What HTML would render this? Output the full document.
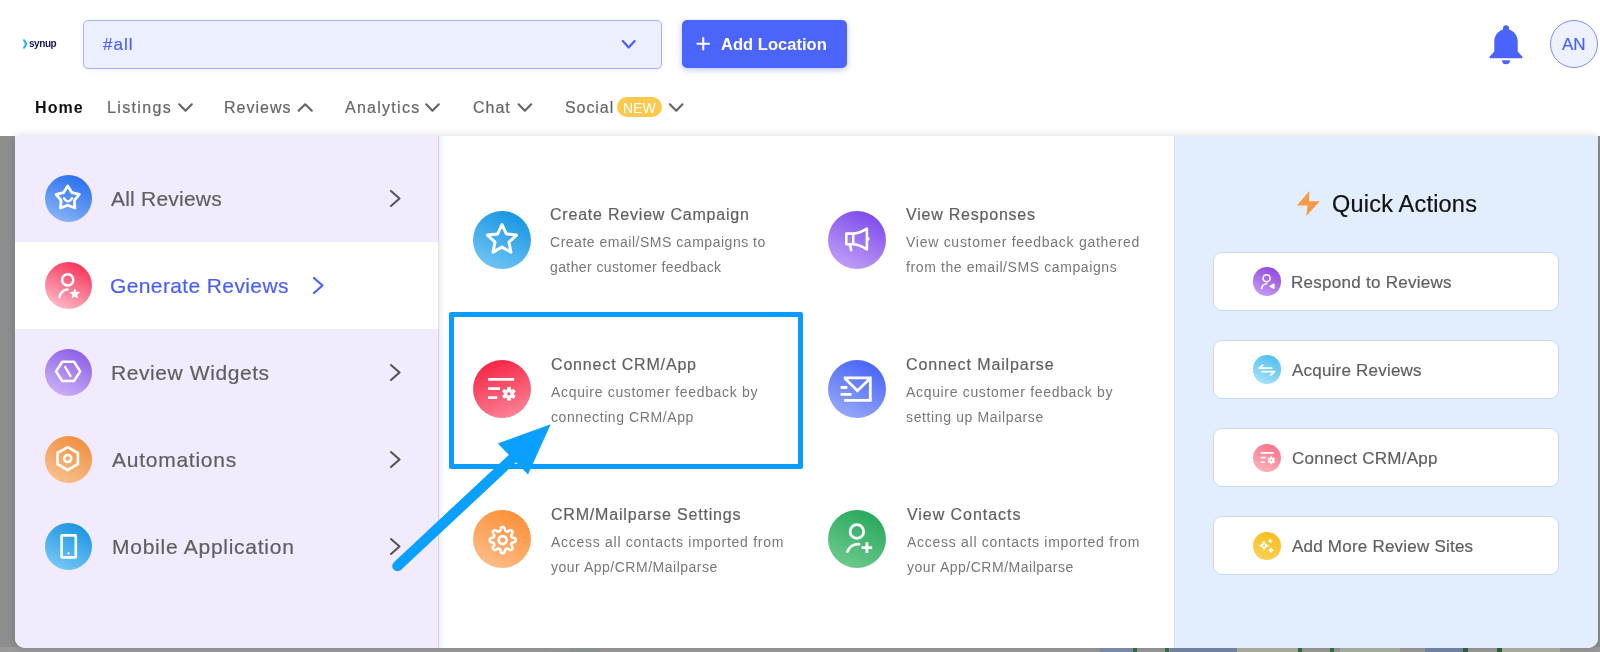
<!DOCTYPE html>
<html><head><meta charset="utf-8">
<style>
*{box-sizing:border-box;margin:0;padding:0}
html,body{width:1600px;height:652px;overflow:hidden;background:#fff;font-family:"Liberation Sans",sans-serif;position:relative;-webkit-font-smoothing:antialiased}
.t{position:absolute;white-space:nowrap;line-height:1;will-change:transform}
.c{position:absolute;border-radius:50%}
svg{position:absolute;overflow:visible}
#hdr{position:absolute;left:0;top:0;width:1600px;height:136px;background:#fff}
#ovl{position:absolute;left:0;top:136px;width:1600px;height:516px;background:#8b8f8f}
#ovb{position:absolute;left:0;top:647px;width:1600px;height:5px;background:#999}
#panel{position:absolute;left:15px;top:136px;width:1582.8px;height:511.5px;border-radius:0 0 10px 10px;overflow:hidden;background:#fff;box-shadow:0 0 9px rgba(0,0,0,.16)}
#lcol{position:absolute;left:0;top:0;width:424px;height:100%;background:#f1ebfd}
#lsel{position:absolute;left:0;top:106px;width:424px;height:87px;background:#fff}
#lsh{position:absolute;left:423px;top:0;width:7px;height:100%;background:linear-gradient(90deg,rgba(0,0,0,.13),rgba(0,0,0,.04) 30%,rgba(0,0,0,0))}
#rcol{position:absolute;left:1159.2px;top:0;width:424px;height:100%;background:#e2eefd}
#rsh{position:absolute;left:1158.7px;top:0;width:1.5px;height:100%;background:rgba(0,0,0,.05);z-index:2}
.card{position:absolute;left:1213px;width:346px;height:59px;background:#fff;border:1px solid #cdd6f6;border-radius:9px}
</style></head><body>
<div id="hdr"></div>
<div id="ovl"></div>
<div id="ovb"></div>
<div id="panel"><div id="lcol"></div><div id="lsel"></div><div id="lsh"></div><div id="rsh"></div><div id="rcol"></div></div>
<svg style="left:22px;top:39px" width="6" height="10" viewBox="0 0 6 10"><path d="M0.5 0.5 L3 0.5 L5.5 5 L3 9.5 L0.5 9.5 L3 5Z" fill="#22b8f0"/></svg>
<div class="t" style="left:29.20px;top:39px;font-size:10px;color:#16195a;letter-spacing:-0.45px;font-weight:700;">synup</div>
<div style="position:absolute;left:83px;top:20px;width:579px;height:49px;background:#ecefff;border:1px solid #a6b3fb;border-radius:5px;box-shadow:0 1px 4px rgba(80,100,240,.10)"></div>
<div class="t" style="left:103.20px;top:36px;font-size:17px;color:#4a60f5;letter-spacing:1.0px;font-weight:400;-webkit-text-stroke:0.2px #4a60f5;">#all</div>
<svg style="left:0;top:0" width="1600" height="136"><path d="M622.8 41 L628.6999999999999 47.5 L634.5999999999999 41" stroke="#4a60f5" stroke-width="2.2" fill="none" stroke-linecap="round" stroke-linejoin="round"/></svg>
<div style="position:absolute;left:681.5px;top:20px;width:165.5px;height:48px;background:#4b65fb;border-radius:5px;box-shadow:0 2px 6px rgba(75,101,251,.35)"></div>
<svg style="left:0;top:0" width="1600" height="136"><path d="M697.5 43.7 H709 M703.25 38 V49.5" stroke="#fff" stroke-width="2.1" stroke-linecap="round"/></svg>
<div class="t" style="left:721.00px;top:36px;font-size:16.5px;color:#fff;letter-spacing:0.03px;font-weight:700;">Add Location</div>
<svg style="left:0;top:0" width="1600" height="136" stroke="none">
<path fill="#4a63fb" d="M1506 25.2 a3 3 0 0 1 3 3 v1.3 c5.2 1.6 8.7 6.2 8.7 12 v10 l4.6 5 v1.8 h-32.6 v-1.8 l4.6 -5 v-10 c0 -5.8 3.5 -10.4 8.7 -12 v-1.3 a3 3 0 0 1 3 -3z"/>
<path fill="#4a63fb" d="M1502 60.2 h8 a4 4 0 0 1 -8 0z"/>
</svg>
<div style="position:absolute;left:1549.8px;top:19.9px;width:48.4px;height:48.4px;border-radius:50%;background:#eef1fe;border:1px solid #7d8ff8"></div>
<div class="t" style="left:1561.50px;top:36px;font-size:17px;color:#4a60f5;letter-spacing:0px;font-weight:400;-webkit-text-stroke:0.2px #4a60f5;">AN</div>
<div class="t" style="left:35.20px;top:100px;font-size:16px;color:#111;letter-spacing:1.1px;font-weight:700;">Home</div>
<div class="t" style="left:106.50px;top:100px;font-size:16px;color:#666;letter-spacing:1.36px;font-weight:400;-webkit-text-stroke:0.2px #666;">Listings</div>
<div class="t" style="left:223.70px;top:100px;font-size:16px;color:#666;letter-spacing:1.02px;font-weight:400;-webkit-text-stroke:0.2px #666;">Reviews</div>
<div class="t" style="left:344.50px;top:100px;font-size:16px;color:#666;letter-spacing:1.27px;font-weight:400;-webkit-text-stroke:0.2px #666;">Analytics</div>
<div class="t" style="left:472.50px;top:100px;font-size:16px;color:#666;letter-spacing:0.98px;font-weight:400;-webkit-text-stroke:0.2px #666;">Chat</div>
<div class="t" style="left:564.50px;top:100px;font-size:16px;color:#666;letter-spacing:0.93px;font-weight:400;-webkit-text-stroke:0.2px #666;">Social</div>
<div style="position:absolute;left:617.4px;top:96.8px;width:44.3px;height:20.2px;border-radius:10px;background:#fcc94e"></div>
<div class="t" style="left:623.30px;top:101px;font-size:14px;color:#fff;letter-spacing:0px;font-weight:400;">NEW</div>
<svg style="left:0;top:0" width="1600" height="136" fill="none" stroke="#666" stroke-width="2.2" stroke-linecap="round" stroke-linejoin="round"><path d="M179.2 104.3 L185.5 110.7 L191.79999999999998 104.3"/><path d="M426.2 104.3 L432.5 110.7 L438.8 104.3"/><path d="M518.6 104.3 L524.9 110.7 L531.2 104.3"/><path d="M669.9 104.3 L676.1999999999999 110.7 L682.5 104.3"/><path d="M298.6 110.7 L305.20000000000005 104.3 L311.8 110.7"/></svg>
<div class="c" style="left:44.50px;top:175.00px;width:47px;height:47px;background:linear-gradient(205deg,#1c66ee,#94bcf8)"></div>
<div class="t" style="left:111.25px;top:188px;font-size:21px;color:#5f5f5f;letter-spacing:0.22px;font-weight:400;-webkit-text-stroke:0.2px #5f5f5f;">All Reviews</div>
<div class="c" style="left:44.50px;top:262.00px;width:47px;height:47px;background:linear-gradient(205deg,#f5214b,#ffcad3)"></div>
<div class="t" style="left:110.20px;top:275px;font-size:21px;color:#4a60f5;letter-spacing:0.38px;font-weight:400;-webkit-text-stroke:0.2px #4a60f5;">Generate Reviews</div>
<div class="c" style="left:44.50px;top:349.00px;width:47px;height:47px;background:linear-gradient(205deg,#8553e6,#d2bbf8)"></div>
<div class="t" style="left:110.50px;top:362px;font-size:21px;color:#5f5f5f;letter-spacing:0.58px;font-weight:400;-webkit-text-stroke:0.2px #5f5f5f;">Review Widgets</div>
<div class="c" style="left:44.50px;top:436.00px;width:47px;height:47px;background:linear-gradient(205deg,#ee8935,#f9c797)"></div>
<div class="t" style="left:111.50px;top:449px;font-size:21px;color:#5f5f5f;letter-spacing:0.75px;font-weight:400;-webkit-text-stroke:0.2px #5f5f5f;">Automations</div>
<div class="c" style="left:44.50px;top:523.00px;width:47px;height:47px;background:linear-gradient(205deg,#0f8de0,#82cef7)"></div>
<div class="t" style="left:112.10px;top:536px;font-size:21px;color:#5f5f5f;letter-spacing:0.74px;font-weight:400;-webkit-text-stroke:0.2px #5f5f5f;">Mobile Application</div>
<svg style="left:40px;top:170px" width="56" height="56" viewBox="0 0 56 56" fill="none" stroke="#fff" stroke-linecap="round" stroke-linejoin="round"><polygon points="27.70,16.00 31.81,22.54 39.30,24.43 34.36,30.36 34.87,38.07 27.70,35.20 20.53,38.07 21.04,30.36 16.10,24.43 23.59,22.54" stroke-width="2.8"/><path d="M23.9 28.1 Q28 34.6 32.1 28.1" stroke-width="2.2"/></svg>
<svg style="left:40px;top:258px" width="56" height="56" viewBox="0 0 56 56" fill="none" stroke="#fff" stroke-linecap="round" stroke-linejoin="round"><circle cx="27.7" cy="21.9" r="5.6" stroke-width="2.5"/><path d="M19.6 39 A8.2 8.2 0 0 1 27.5 31.6" stroke-width="2.5"/><polygon points="34.80,30.30 36.33,33.80 40.13,34.17 37.27,36.70 38.09,40.43 34.80,38.50 31.51,40.43 32.33,36.70 29.47,34.17 33.27,33.80" fill="#fff" stroke="none"/></svg>
<svg style="left:40px;top:344px" width="56" height="56" viewBox="0 0 56 56" fill="none" stroke="#fff" stroke-linecap="round" stroke-linejoin="round"><polygon points="16,27.4 22.3,17.8 34,17.8 40.2,27.4 34,37 22.3,37" stroke-width="2.6"/><path d="M25.2 23 L30.4 32" stroke-width="2.4"/></svg>
<svg style="left:40px;top:431px" width="56" height="56" viewBox="0 0 56 56" fill="none" stroke="#fff" stroke-linecap="round" stroke-linejoin="round"><polygon points="27.7,16.2 37.9,22 37.9,33.2 27.7,39 17.5,33.2 17.5,22" stroke-width="2.6"/><circle cx="27.7" cy="27.5" r="3.6" stroke-width="2.5"/></svg>
<svg style="left:40px;top:518px" width="56" height="56" viewBox="0 0 56 56" fill="none" stroke="#fff" stroke-linecap="round" stroke-linejoin="round"><rect x="21.6" y="17.4" width="14.2" height="22" rx="0.5" stroke-width="2.6"/><circle cx="28.4" cy="35.4" r="1.1" fill="#fff" stroke="none"/></svg>
<svg style="left:0;top:0" width="1600" height="652" fill="none" stroke="#555" stroke-width="2.1" stroke-linecap="round" stroke-linejoin="round"><path d="M391 191.0 L399.5 198.5 L391 206.0"/><path d="M391 365.0 L399.5 372.5 L391 380.0"/><path d="M391 452.0 L399.5 459.5 L391 467.0"/><path d="M391 539.0 L399.5 546.5 L391 554.0"/></svg>
<svg style="left:0;top:0" width="1600" height="652" fill="none" stroke="#4a60f5" stroke-width="2.2" stroke-linecap="round" stroke-linejoin="round"><path d="M314 278 L322.5 285.5 L314 293"/></svg>
<div class="c" style="left:472.50px;top:210.60px;width:58px;height:58px;background:linear-gradient(205deg,#0a8fe0,#7ccaf6)"></div>
<div class="t" style="left:550.20px;top:207px;font-size:16px;color:#606060;letter-spacing:0.79px;font-weight:400;-webkit-text-stroke:0.2px #606060;">Create Review Campaign</div>
<div class="t" style="left:550.20px;top:235px;font-size:14px;color:#777;letter-spacing:0.52px;font-weight:400;">Create email/SMS campaigns to</div>
<div class="t" style="left:550.20px;top:260px;font-size:14px;color:#777;letter-spacing:0.4px;font-weight:400;">gather customer feedback</div>
<div class="c" style="left:828.40px;top:210.50px;width:58px;height:58px;background:linear-gradient(205deg,#7440ea,#c8a9f7)"></div>
<div class="t" style="left:906.20px;top:207px;font-size:16px;color:#606060;letter-spacing:0.78px;font-weight:400;-webkit-text-stroke:0.2px #606060;">View Responses</div>
<div class="t" style="left:906.20px;top:235px;font-size:14px;color:#777;letter-spacing:0.73px;font-weight:400;">View customer feedback gathered</div>
<div class="t" style="left:906.20px;top:260px;font-size:14px;color:#777;letter-spacing:0.6px;font-weight:400;">from the email/SMS campaigns</div>
<div class="c" style="left:472.50px;top:360.20px;width:58px;height:58px;background:linear-gradient(160deg,#f61a3c,#fb8d9e)"></div>
<div class="t" style="left:550.60px;top:357px;font-size:16px;color:#606060;letter-spacing:0.83px;font-weight:400;-webkit-text-stroke:0.2px #606060;">Connect CRM/App</div>
<div class="t" style="left:550.60px;top:385px;font-size:14px;color:#777;letter-spacing:0.67px;font-weight:400;">Acquire customer feedback by</div>
<div class="t" style="left:550.60px;top:410px;font-size:14px;color:#777;letter-spacing:0.59px;font-weight:400;">connecting CRM/App</div>
<div class="c" style="left:828.40px;top:359.90px;width:58px;height:58px;background:linear-gradient(205deg,#3d5bf7,#a0b1fa)"></div>
<div class="t" style="left:906.20px;top:357px;font-size:16px;color:#606060;letter-spacing:0.89px;font-weight:400;-webkit-text-stroke:0.2px #606060;">Connect Mailparse</div>
<div class="t" style="left:906.20px;top:385px;font-size:14px;color:#777;letter-spacing:0.67px;font-weight:400;">Acquire customer feedback by</div>
<div class="t" style="left:906.20px;top:410px;font-size:14px;color:#777;letter-spacing:0.63px;font-weight:400;">setting up Mailparse</div>
<div class="c" style="left:472.50px;top:509.90px;width:58px;height:58px;background:linear-gradient(205deg,#fb8a2c,#fcc293)"></div>
<div class="t" style="left:550.60px;top:507px;font-size:16px;color:#606060;letter-spacing:0.81px;font-weight:400;-webkit-text-stroke:0.2px #606060;">CRM/Mailparse Settings</div>
<div class="t" style="left:550.60px;top:535px;font-size:14px;color:#777;letter-spacing:0.72px;font-weight:400;">Access all contacts imported from</div>
<div class="t" style="left:550.60px;top:560px;font-size:14px;color:#777;letter-spacing:0.51px;font-weight:400;">your App/CRM/Mailparse</div>
<div class="c" style="left:828.40px;top:510.00px;width:58px;height:58px;background:linear-gradient(205deg,#1ea456,#76ce94)"></div>
<div class="t" style="left:906.60px;top:507px;font-size:16px;color:#606060;letter-spacing:0.95px;font-weight:400;-webkit-text-stroke:0.2px #606060;">View Contacts</div>
<div class="t" style="left:906.60px;top:535px;font-size:14px;color:#777;letter-spacing:0.72px;font-weight:400;">Access all contacts imported from</div>
<div class="t" style="left:906.60px;top:560px;font-size:14px;color:#777;letter-spacing:0.51px;font-weight:400;">your App/CRM/Mailparse</div>
<svg style="left:471.5px;top:209.6px" width="60" height="60" viewBox="0 0 60 60" fill="none" stroke="#fff" stroke-linecap="round" stroke-linejoin="round"><polygon points="30.00,14.50 34.29,23.89 44.55,25.07 36.94,32.06 38.99,42.18 30.00,37.10 21.01,42.18 23.06,32.06 15.45,25.07 25.71,23.89" stroke-width="3"/></svg>
<svg style="left:827px;top:209px" width="60" height="60" viewBox="0 0 60 60" fill="none" stroke="#fff" stroke-linecap="round" stroke-linejoin="round"><path d="M19.3 24.6 H26.2 V35.3 H19.3Z M26.2 24.6 C31 24.6 36 22 39.9 19.6 V40.4 C36 38 31 35.3 26.2 35.3 M40 28 L41.3 29.9 L40 31.8 M22.7 35.4 L24.2 41.2" stroke-width="2.6"/></svg>
<svg style="left:471px;top:359px" width="60" height="60" viewBox="0 0 60 60" fill="none" stroke="#fff" stroke-linecap="round" stroke-linejoin="round"><path d="M17 20.4 H43.2 M17 29.6 H29 M17 38.6 H26.2" stroke-width="2.8" stroke-linecap="butt"/><path d="M36.52 30.41 L36.46 28.36 L39.34 28.36 L39.28 30.41 L41.01 31.41 L42.76 30.33 L44.20 32.83 L42.39 33.80 L42.39 35.80 L44.20 36.77 L42.76 39.27 L41.01 38.19 L39.28 39.19 L39.34 41.24 L36.46 41.24 L36.52 39.19 L34.79 38.19 L33.04 39.27 L31.60 36.77 L33.41 35.80 L33.41 33.80 L31.60 32.83 L33.04 30.33 L34.79 31.41Z" fill="#fff" stroke="#fff" stroke-width="1"/><circle cx="37.9" cy="34.8" r="1.6" fill="#f8506a" stroke="none"/></svg>
<svg style="left:827px;top:359px" width="60" height="60" viewBox="0 0 60 60" fill="none" stroke="#fff" stroke-linecap="round" stroke-linejoin="round"><path d="M16.8 18.9 H43.3 V41.3 H17.1 M17.8 19.2 L30.4 31.8 L42.5 20 M13.6 28.5 H20.3 M13.6 35.4 H24.6" stroke-width="2.8" stroke-linecap="butt" stroke-linejoin="miter"/></svg>
<svg style="left:471px;top:509px" width="60" height="60" viewBox="0 0 60 60" fill="none" stroke="#fff" stroke-linecap="round" stroke-linejoin="round"><path d="M44.70 31.10 L44.68 31.44 L44.64 31.78 L44.54 32.11 L44.37 32.43 L44.09 32.73 L43.65 32.99 L43.03 33.20 L42.34 33.36 L41.72 33.51 L41.27 33.66 L40.96 33.84 L40.75 34.04 L40.60 34.25 L40.49 34.47 L40.38 34.70 L40.30 34.93 L40.23 35.17 L40.18 35.42 L40.19 35.71 L40.28 36.05 L40.49 36.48 L40.82 37.02 L41.20 37.63 L41.48 38.21 L41.61 38.71 L41.60 39.12 L41.49 39.46 L41.33 39.77 L41.12 40.04 L40.89 40.29 L40.64 40.52 L40.37 40.73 L40.06 40.89 L39.72 41.00 L39.31 41.01 L38.81 40.88 L38.23 40.60 L37.62 40.22 L37.08 39.89 L36.65 39.68 L36.31 39.59 L36.02 39.58 L35.77 39.63 L35.53 39.70 L35.30 39.78 L35.07 39.89 L34.85 40.00 L34.64 40.15 L34.44 40.36 L34.26 40.67 L34.11 41.12 L33.96 41.74 L33.80 42.43 L33.59 43.05 L33.33 43.49 L33.03 43.77 L32.71 43.94 L32.38 44.04 L32.04 44.08 L31.70 44.10 L31.36 44.08 L31.02 44.04 L30.69 43.94 L30.37 43.77 L30.07 43.49 L29.81 43.05 L29.60 42.43 L29.44 41.74 L29.29 41.12 L29.14 40.67 L28.96 40.36 L28.76 40.15 L28.55 40.00 L28.33 39.89 L28.10 39.78 L27.87 39.70 L27.63 39.63 L27.38 39.58 L27.09 39.59 L26.75 39.68 L26.32 39.89 L25.78 40.22 L25.17 40.60 L24.59 40.88 L24.09 41.01 L23.68 41.00 L23.34 40.89 L23.03 40.73 L22.76 40.52 L22.51 40.29 L22.28 40.04 L22.07 39.77 L21.91 39.46 L21.80 39.12 L21.79 38.71 L21.92 38.21 L22.20 37.63 L22.58 37.02 L22.91 36.48 L23.12 36.05 L23.21 35.71 L23.22 35.42 L23.17 35.17 L23.10 34.93 L23.02 34.70 L22.91 34.47 L22.80 34.25 L22.65 34.04 L22.44 33.84 L22.13 33.66 L21.68 33.51 L21.06 33.36 L20.37 33.20 L19.75 32.99 L19.31 32.73 L19.03 32.43 L18.86 32.11 L18.76 31.78 L18.72 31.44 L18.70 31.10 L18.72 30.76 L18.76 30.42 L18.86 30.09 L19.03 29.77 L19.31 29.47 L19.75 29.21 L20.37 29.00 L21.06 28.84 L21.68 28.69 L22.13 28.54 L22.44 28.36 L22.65 28.16 L22.80 27.95 L22.91 27.73 L23.02 27.50 L23.10 27.27 L23.17 27.03 L23.22 26.78 L23.21 26.49 L23.12 26.15 L22.91 25.72 L22.58 25.18 L22.20 24.57 L21.92 23.99 L21.79 23.49 L21.80 23.08 L21.91 22.74 L22.07 22.43 L22.28 22.16 L22.51 21.91 L22.76 21.68 L23.03 21.47 L23.34 21.31 L23.68 21.20 L24.09 21.19 L24.59 21.32 L25.17 21.60 L25.78 21.98 L26.32 22.31 L26.75 22.52 L27.09 22.61 L27.38 22.62 L27.63 22.57 L27.87 22.50 L28.10 22.42 L28.33 22.31 L28.55 22.20 L28.76 22.05 L28.96 21.84 L29.14 21.53 L29.29 21.08 L29.44 20.46 L29.60 19.77 L29.81 19.15 L30.07 18.71 L30.37 18.43 L30.69 18.26 L31.02 18.16 L31.36 18.12 L31.70 18.10 L32.04 18.12 L32.38 18.16 L32.71 18.26 L33.03 18.43 L33.33 18.71 L33.59 19.15 L33.80 19.77 L33.96 20.46 L34.11 21.08 L34.26 21.53 L34.44 21.84 L34.64 22.05 L34.85 22.20 L35.07 22.31 L35.30 22.42 L35.53 22.50 L35.77 22.57 L36.02 22.62 L36.31 22.61 L36.65 22.52 L37.08 22.31 L37.62 21.98 L38.23 21.60 L38.81 21.32 L39.31 21.19 L39.72 21.20 L40.06 21.31 L40.37 21.47 L40.64 21.68 L40.89 21.91 L41.12 22.16 L41.33 22.43 L41.49 22.74 L41.60 23.08 L41.61 23.49 L41.48 23.99 L41.20 24.57 L40.82 25.18 L40.49 25.72 L40.28 26.15 L40.19 26.49 L40.18 26.78 L40.23 27.03 L40.30 27.27 L40.38 27.50 L40.49 27.73 L40.60 27.95 L40.75 28.16 L40.96 28.36 L41.27 28.54 L41.72 28.69 L42.34 28.84 L43.03 29.00 L43.65 29.21 L44.09 29.47 L44.37 29.77 L44.54 30.09 L44.64 30.42 L44.68 30.76Z" stroke-width="2.6"/><circle cx="31.7" cy="31.1" r="4.0" stroke-width="2.6"/></svg>
<svg style="left:827px;top:509px" width="60" height="60" viewBox="0 0 60 60" fill="none" stroke="#fff" stroke-linecap="round" stroke-linejoin="round"><circle cx="29.9" cy="22.5" r="6.8" stroke-width="2.8"/><path d="M20.4 42.6 A11.5 11.5 0 0 1 32 35.2" stroke-width="2.8"/><path d="M34.6 38.6 H45.2 M39.9 33.3 V43.9" stroke-width="2.8" stroke-linecap="butt"/></svg>
<div style="position:absolute;left:449px;top:312.4px;width:353.6px;height:156.4px;border:5.2px solid #0a9dff;border-radius:2px"></div>
<svg style="left:0;top:0" width="1600" height="652">
<path d="M397.5 566 L512 459" stroke="#0aa0ff" stroke-width="10.5" stroke-linecap="round"/>
<polygon points="550.7,424.3 497.8,443.4 528,474.6" fill="#0aa0ff"/>
</svg>
<svg style="left:0;top:0" width="1600" height="652"><polygon points="1309.4,191 1296.9,205.6 1307.5,205.6 1306.3,215.9 1319.8,201.3 1309,201.3" fill="#f59b45"/></svg>
<div class="t" style="left:1332.10px;top:193px;font-size:23.5px;color:#111;letter-spacing:0.21px;font-weight:400;-webkit-text-stroke:0.2px #111;">Quick Actions</div>
<div class="card" style="top:251.50px"></div>
<div class="c" style="left:1252.50px;top:267.30px;width:28.6px;height:28.6px;background:linear-gradient(205deg,#8b3ddc,#cca6f4)"></div>
<div class="t" style="left:1290.90px;top:274px;font-size:17px;color:#5f5f5f;letter-spacing:0.27px;font-weight:400;-webkit-text-stroke:0.2px #5f5f5f;">Respond to Reviews</div>
<div class="card" style="top:339.60px"></div>
<div class="c" style="left:1252.50px;top:355.40px;width:28.6px;height:28.6px;background:linear-gradient(205deg,#43bcee,#b0e5fb)"></div>
<div class="t" style="left:1291.90px;top:362px;font-size:17px;color:#5f5f5f;letter-spacing:0.21px;font-weight:400;-webkit-text-stroke:0.2px #5f5f5f;">Acquire Reviews</div>
<div class="card" style="top:427.70px"></div>
<div class="c" style="left:1252.50px;top:443.50px;width:28.6px;height:28.6px;background:linear-gradient(205deg,#fa6a80,#ffbac5)"></div>
<div class="t" style="left:1291.90px;top:450px;font-size:17px;color:#5f5f5f;letter-spacing:0.27px;font-weight:400;-webkit-text-stroke:0.2px #5f5f5f;">Connect CRM/App</div>
<div class="card" style="top:515.80px"></div>
<div class="c" style="left:1252.50px;top:531.60px;width:28.6px;height:28.6px;background:linear-gradient(205deg,#f6bb14,#fbd35c)"></div>
<div class="t" style="left:1291.90px;top:538px;font-size:17px;color:#5f5f5f;letter-spacing:0.22px;font-weight:400;-webkit-text-stroke:0.2px #5f5f5f;">Add More Review Sites</div>
<svg style="left:1248px;top:262.7px" width="38" height="38" viewBox="0 0 38 38" fill="none" stroke="#fff" stroke-linecap="round" stroke-linejoin="round"><circle cx="18.6" cy="15.2" r="3.5" stroke-width="1.6"/><path d="M13.7 25.6 A5.2 5.2 0 0 1 18.8 20.7" stroke-width="1.6"/><path d="M26 21 L22 23.2 L26 25.4Z M24 23.2 H26.2" fill="#fff" stroke-width="1.2"/></svg>
<svg style="left:1248px;top:350.8px" width="38" height="38" viewBox="0 0 38 38" fill="none" stroke="#fff" stroke-linecap="round" stroke-linejoin="round"><path d="M11 17.2 H23.6 M11 17.2 L14.9 14.2 M14 20.7 H26.5 L22.7 24" stroke-width="1.7"/></svg>
<svg style="left:1248px;top:438.9px" width="38" height="38" viewBox="0 0 38 38" fill="none" stroke="#fff" stroke-linecap="round" stroke-linejoin="round"><path d="M12.6 13.9 H25.8 M12.6 18.6 H17.8 M12.6 23.3 H16.8" stroke-width="1.6" stroke-linecap="butt"/><path d="M22.55 18.91 L22.51 17.79 L24.09 17.79 L24.05 18.91 L24.99 19.46 L25.95 18.86 L26.74 20.22 L25.74 20.75 L25.74 21.85 L26.74 22.38 L25.95 23.74 L24.99 23.14 L24.05 23.69 L24.09 24.81 L22.51 24.81 L22.55 23.69 L21.61 23.14 L20.65 23.74 L19.86 22.38 L20.86 21.85 L20.86 20.75 L19.86 20.22 L20.65 18.86 L21.61 19.46Z" fill="#fff" stroke="#fff" stroke-width="0.6"/><circle cx="23.3" cy="21.3" r="0.8" fill="#fc8a9a" stroke="none"/></svg>
<svg style="left:1248px;top:527.0px" width="38" height="38" viewBox="0 0 38 38" fill="none" stroke="#fff" stroke-linecap="round" stroke-linejoin="round"><path d="M16 13.400000000000002 Q17.456 17.144000000000002 21.2 18.6 Q17.456 20.056 16 23.8 Q14.544 20.056 10.8 18.6 Q14.544 17.144000000000002 16 13.400000000000002Z M22.3 11.4 Q23.028000000000002 13.272 24.900000000000002 14 Q23.028000000000002 14.728 22.3 16.6 Q21.572 14.728 19.7 14 Q21.572 13.272 22.3 11.4Z M23 20.3 Q23.84 22.46 26 23.3 Q23.84 24.14 23 26.3 Q22.16 24.14 20 23.3 Q22.16 22.46 23 20.3Z" fill="#fff" stroke="none"/><circle cx="16" cy="18.6" r="1.1" fill="#f8c534" stroke="none"/></svg>
<div style="position:absolute;left:550px;top:648px;width:20px;height:4px;background:#8f9392"></div>
<div style="position:absolute;left:570px;top:648px;width:30px;height:4px;background:#899090"></div>
<div style="position:absolute;left:1100px;top:648px;width:35px;height:4px;background:#7a88a5"></div>
<div style="position:absolute;left:1133px;top:648px;width:4px;height:4px;background:#2f6b3c"></div>
<div style="position:absolute;left:1165px;top:648px;width:4px;height:4px;background:#2f6b3c"></div>
<div style="position:absolute;left:1170px;top:648px;width:67px;height:4px;background:#6f80a0"></div>
<div style="position:absolute;left:1237px;top:648px;width:63px;height:4px;background:#a7a697"></div>
<div style="position:absolute;left:1298px;top:648px;width:4px;height:4px;background:#2f6b3c"></div>
<div style="position:absolute;left:1330px;top:648px;width:4px;height:4px;background:#2f6b3c"></div>
<div style="position:absolute;left:1340px;top:648px;width:60px;height:4px;background:#a3a99b"></div>
<div style="position:absolute;left:1425px;top:648px;width:38px;height:4px;background:#6f80a0"></div>
<div style="position:absolute;left:1463px;top:648px;width:5px;height:4px;background:#2d5e38"></div>
<div style="position:absolute;left:1497px;top:648px;width:5px;height:4px;background:#2d5e38"></div>
<div style="position:absolute;left:1502px;top:648px;width:58px;height:4px;background:#a9a89c"></div>
</body></html>
